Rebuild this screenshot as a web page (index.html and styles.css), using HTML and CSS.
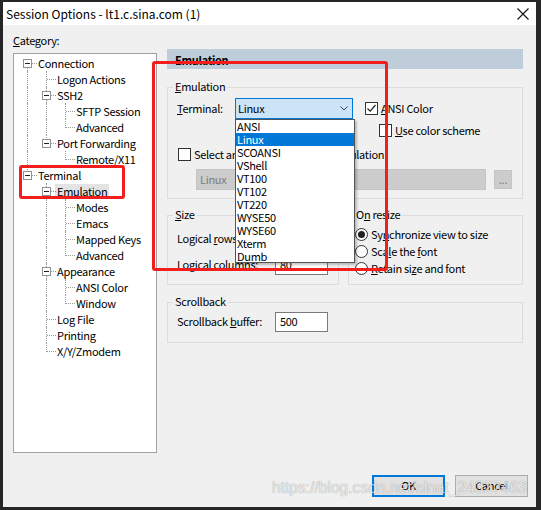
FILE: index.html
```html
<!DOCTYPE html>
<html>
<head>
<meta charset="utf-8">
<title>Session Options</title>
<link rel="stylesheet" href="styles.css">
</head>
<body>
<div class="window">
  <div class="titlebar">
    <span class="title">Session Options - lt1.c.sina.com (1)</span>
    <svg class="close" width="12" height="12" viewBox="0 0 12 12"><path d="M0.5 0.5 L11.5 11.5 M11.5 0.5 L0.5 11.5" stroke="#111" stroke-width="1.1" fill="none"/></svg>
  </div>
  <div class="content">
    <div class="main">
      <div class="left">
        <div class="cat-label"><u>C</u>ategory:</div>
        <div class="tree">
          <div class="node"><span class="c fd b"><i></i></span><span class="txt">Connection</span></div>
          <div class="node"><span class="c v"></span><span class="c t"></span><span class="txt">Logon Actions</span></div>
          <div class="node"><span class="c v"></span><span class="c t b"><i></i></span><span class="txt">SSH2</span></div>
          <div class="node"><span class="c v"></span><span class="c v"></span><span class="c t"></span><span class="txt">SFTP Session</span></div>
          <div class="node"><span class="c v"></span><span class="c v"></span><span class="c l"></span><span class="txt">Advanced</span></div>
          <div class="node"><span class="c v"></span><span class="c l b"><i></i></span><span class="txt">Port Forwarding</span></div>
          <div class="node"><span class="c v"></span><span class="c"></span><span class="c l"></span><span class="txt">Remote/X11</span></div>
          <div class="node"><span class="c l b"><i></i></span><span class="txt">Terminal</span></div>
          <div class="node"><span class="c"></span><span class="c t b"><i></i></span><span class="txt sel">Emulation</span></div>
          <div class="node"><span class="c"></span><span class="c v"></span><span class="c t"></span><span class="txt">Modes</span></div>
          <div class="node"><span class="c"></span><span class="c v"></span><span class="c t"></span><span class="txt">Emacs</span></div>
          <div class="node"><span class="c"></span><span class="c v"></span><span class="c t"></span><span class="txt">Mapped Keys</span></div>
          <div class="node"><span class="c"></span><span class="c v"></span><span class="c l"></span><span class="txt">Advanced</span></div>
          <div class="node"><span class="c"></span><span class="c t b"><i></i></span><span class="txt">Appearance</span></div>
          <div class="node"><span class="c"></span><span class="c v"></span><span class="c t"></span><span class="txt">ANSI Color</span></div>
          <div class="node"><span class="c"></span><span class="c v"></span><span class="c l"></span><span class="txt">Window</span></div>
          <div class="node"><span class="c"></span><span class="c t"></span><span class="txt">Log File</span></div>
          <div class="node"><span class="c"></span><span class="c t"></span><span class="txt">Printing</span></div>
          <div class="node"><span class="c"></span><span class="c l"></span><span class="txt">X/Y/Zmodem</span></div>
        </div>
      </div>
      <div class="right">
        <div class="header">Emulation</div>
        <fieldset class="group g-emu">
          <legend><u>E</u>mulation</legend>
          <div class="row r-term">
            <span class="lbl-term"><u>T</u>erminal:</span>
            <div class="combo">
              <span class="ctxt">Linux</span>
              <svg width="8" height="5" viewBox="0 0 8 5"><path d="M0.5 0.5 L4 4 L7.5 0.5" stroke="#444" stroke-width="1" fill="none"/></svg>
              <ul class="droplist">
                <li>ANSI</li>
                <li class="hl">Linux</li>
                <li>SCOANSI</li>
                <li>VShell</li>
                <li>VT100</li>
                <li>VT102</li>
                <li>VT220</li>
                <li>WYSE50</li>
                <li>WYSE60</li>
                <li>Xterm</li>
                <li>Dumb</li>
              </ul>
            </div>
            <span class="check on"><svg width="11" height="11" viewBox="0 0 11 11"><path d="M1.5 5.5 L4.2 8.2 L9.5 2" stroke="#222" stroke-width="1.2" fill="none"/></svg></span>
            <span class="ctext"><u>A</u>NSI Color</span>
          </div>
          <div class="row r-scheme">
            <span class="check"></span>
            <span class="ctext"><u>U</u>se color scheme</span>
          </div>
          <div class="row r-alt">
            <span class="check"></span>
            <span class="ctext">Select an alternate keyboard emulation</span>
          </div>
          <div class="row r-dis">
            <div class="dcombo">Linux</div>
            <div class="dbtn">...</div>
          </div>
        </fieldset>
        <div class="pair">
          <fieldset class="group g-size">
            <legend><u>S</u>ize</legend>
            <div class="row frow">
              <span class="flabel">Logical <u>r</u>ows:</span>
              <span class="input">24</span>
            </div>
            <div class="row frow frow2">
              <span class="flabel">Logical <u>c</u>olumns:</span>
              <span class="input">80</span>
            </div>
          </fieldset>
          <fieldset class="group g-resize">
            <legend>O<u>n</u> resize</legend>
            <div class="row rrow"><span class="radio on"></span><span class="ctext">Sy<u>n</u>chronize view to size</span></div>
            <div class="row rrow"><span class="radio"></span><span class="ctext">Sca<u>l</u>e the <u>f</u>ont</span></div>
            <div class="row rrow"><span class="radio"></span><span class="ctext"><u>R</u>etain si<u>z</u>e and font</span></div>
          </fieldset>
        </div>
        <fieldset class="group g-scroll">
          <legend>Scrollback</legend>
          <div class="row frow">
            <span class="flabel">Scrollback <u>b</u>uffer:</span>
            <span class="input">500</span>
          </div>
        </fieldset>
      </div>
    </div>
    <div class="buttons">
      <div class="btn primary">OK</div>
      <div class="btn">Cancel</div>
    </div>
  </div>
</div>
<div class="mark mark-big"></div>
<div class="mark mark-small"></div>
<div class="watermark">https://blog.csdn.net/sinat_24327463</div>
</body>
</html>
```
FILE: styles.css
```css
* { box-sizing: border-box; }
html, body { margin: 0; }
body {
  width: 541px;
  height: 510px;
  padding: 2px 0 0 3px;
  background: #262626;
  position: relative;
  overflow: hidden;
  font-family: "Noto Sans CJK SC", "Noto Sans", sans-serif;
  font-size: 11px;
  letter-spacing: -0.3px;
  color: #000;
}
u { text-decoration: underline; text-underline-offset: 1px; }

.window {
  width: 533px;
  height: 505px;
  background: #f0f0f0;
  display: flex;
  flex-direction: column;
}
.titlebar {
  height: 23px;
  background: #fff;
  display: flex;
  align-items: center;
  justify-content: space-between;
  padding: 0 7px 0 3px;
}
.title { font-size: 12px; letter-spacing: 0; line-height: 16px; }
.close { display: block; }

.content {
  flex: 1;
  display: flex;
  flex-direction: column;
  padding: 8px 8px 10px 10px;
}
.main { display: flex; gap: 10px; }
.left { width: 144px; }
.cat-label { height: 20px; line-height: 14px; }
.tree {
  height: 400px;
  border: 1px solid #a0a0a8;
  background: #fff;
  padding: 1px 0 0 4px;
}
.node { display: flex; height: 16px; align-items: center; }
.c { width: 19px; height: 16px; position: relative; flex: none; }
.c::before, .c::after { content: ""; position: absolute; }
.v::before, .t::before { left: 9px; top: 0; bottom: 0; border-left: 1px dotted #9a9a9a; }
.l::before { left: 9px; top: 0; height: 9px; border-left: 1px dotted #9a9a9a; }
.fd::before { left: 9px; top: 8px; bottom: 0; border-left: 1px dotted #9a9a9a; }
.t::after, .l::after, .fd::after { left: 10px; right: 0; top: 8px; border-top: 1px dotted #9a9a9a; }
.c i {
  position: absolute;
  left: 5px;
  top: 4px;
  width: 9px;
  height: 9px;
  border: 1px solid #919191;
  background: #fff;
  z-index: 1;
}
.c i::after {
  content: "";
  position: absolute;
  left: 1px;
  top: 3px;
  width: 5px;
  height: 1px;
  background: #222;
}
.txt { margin-left: -1px; padding: 0 2px 1px; line-height: 14px; height: 15px; white-space: nowrap; }
.txt.sel { background: #e3e3e3; }

.right { width: 356px; margin-top: 16px; }
.header {
  height: 20px;
  line-height: 17px;
  padding: 3px 0 0 8px;
  background: #bfcddb;
  font-weight: bold;
}
.group {
  margin: 0;
  border: 1px solid #dcdcdc;
  padding: 0 6px 0 9px;
  min-width: 0;
}
.group legend {
  padding: 0 2px;
  margin-left: -4px;
  line-height: 13px;
  height: 14px;
}
.g-emu { margin-top: 11px; height: 119px; padding-top: 4px; }
.row { display: flex; align-items: center; white-space: nowrap; }
.r-term { height: 21px; }
.lbl-term, .flabel, .ctext, .ctxt { padding-bottom: 2px; line-height: 14px; }
.lbl-term { width: 58px; }
.combo {
  position: relative;
  width: 118px;
  height: 21px;
  border: 1px solid #0078d7;
  background: #cce4f7;
  display: flex;
  align-items: center;
  justify-content: space-between;
  padding: 0 4px 0 2px;
}
.combo svg { display: block; }
.droplist {
  position: absolute;
  left: -1px;
  top: 20px;
  width: 120px;
  height: 144px;
  margin: 0;
  padding: 0;
  list-style: none;
  background: #fff;
  border: 1px solid #555;
  box-shadow: 2px 2px 2px rgba(0, 0, 0, 0.22);
  z-index: 5;
}
.droplist li { height: 13px; line-height: 12px; padding-left: 1px; }
.droplist li.hl { background: #0078d7; color: #fff; }
.check {
  width: 13px;
  height: 13px;
  border: 1px solid #333;
  background: #fff;
  flex: none;
  display: flex;
  align-items: center;
  justify-content: center;
}
.check svg { display: block; }
.r-term .check { margin-left: 12px; }
.ctext { margin-left: 3px; }
.r-scheme { margin-top: 5px; height: 13px; padding-left: 202px; }
.r-alt { margin-top: 11px; height: 13px; padding-left: 1px; }
.r-dis { margin-top: 8px; height: 21px; padding-left: 19px; }
.dcombo {
  width: 290px;
  height: 21px;
  background: #cccccc;
  border: 1px solid #c4c4c4;
  color: #7d7d7d;
  line-height: 18px;
  padding-left: 3px;
}
.dbtn {
  margin-left: 8px;
  width: 18px;
  height: 19px;
  background: #cccccc;
  border: 1px solid #c4c4c4;
  color: #7d7d7d;
  text-align: center;
  line-height: 17px;
}

.pair { display: flex; gap: 9px; margin-top: 9px; }
.g-size { width: 172px; height: 77px; padding-top: 7px; }
.g-resize { width: 175px; height: 77px; padding: 4px 4px 0 6px; }
.g-resize legend { margin-left: -1px; }
.frow { height: 20px; }
.frow2 { margin-top: 6px; }
.flabel { width: 98px; flex: none; }
.input {
  width: 53px;
  height: 20px;
  border: 1px solid #7a7a7a;
  background: #fff;
  line-height: 17px;
  padding-left: 4px;
}
.rrow { height: 17px; }
.radio {
  width: 13px;
  height: 13px;
  border: 1px solid #333;
  border-radius: 50%;
  background: #fff;
  flex: none;
  display: flex;
  align-items: center;
  justify-content: center;
}
.radio.on::after {
  content: "";
  width: 7px;
  height: 7px;
  border-radius: 50%;
  background: #222;
}
.g-scroll { margin-top: 10px; height: 48px; padding-top: 3px; }

.buttons {
  margin-top: auto;
  display: flex;
  justify-content: flex-end;
  gap: 10px;
}
.btn {
  width: 73px;
  height: 22px;
  border: 1px solid #adadad;
  background: #e1e1e1;
  text-align: center;
  line-height: 19px;
}
.btn.primary { border: 2px solid #0078d7; line-height: 17px; }

.mark {
  position: absolute;
  border: 3px solid #f21d1d;
  border-radius: 3px;
  z-index: 10;
}
.mark-big { left: 152px; top: 61px; width: 236px; height: 210px; }
.mark-small { left: 19px; top: 165px; width: 106px; height: 34px; }

.watermark {
  position: absolute;
  left: 272px;
  top: 479px;
  font-family: "Liberation Sans", Arial, sans-serif;
  font-size: 15.6px;
  letter-spacing: 0;
  line-height: 18px;
  color: rgba(255, 255, 255, 0.78);
  text-shadow: 0 0 1px rgba(0, 0, 0, 0.45);
  z-index: 11;
  white-space: nowrap;
}
```
